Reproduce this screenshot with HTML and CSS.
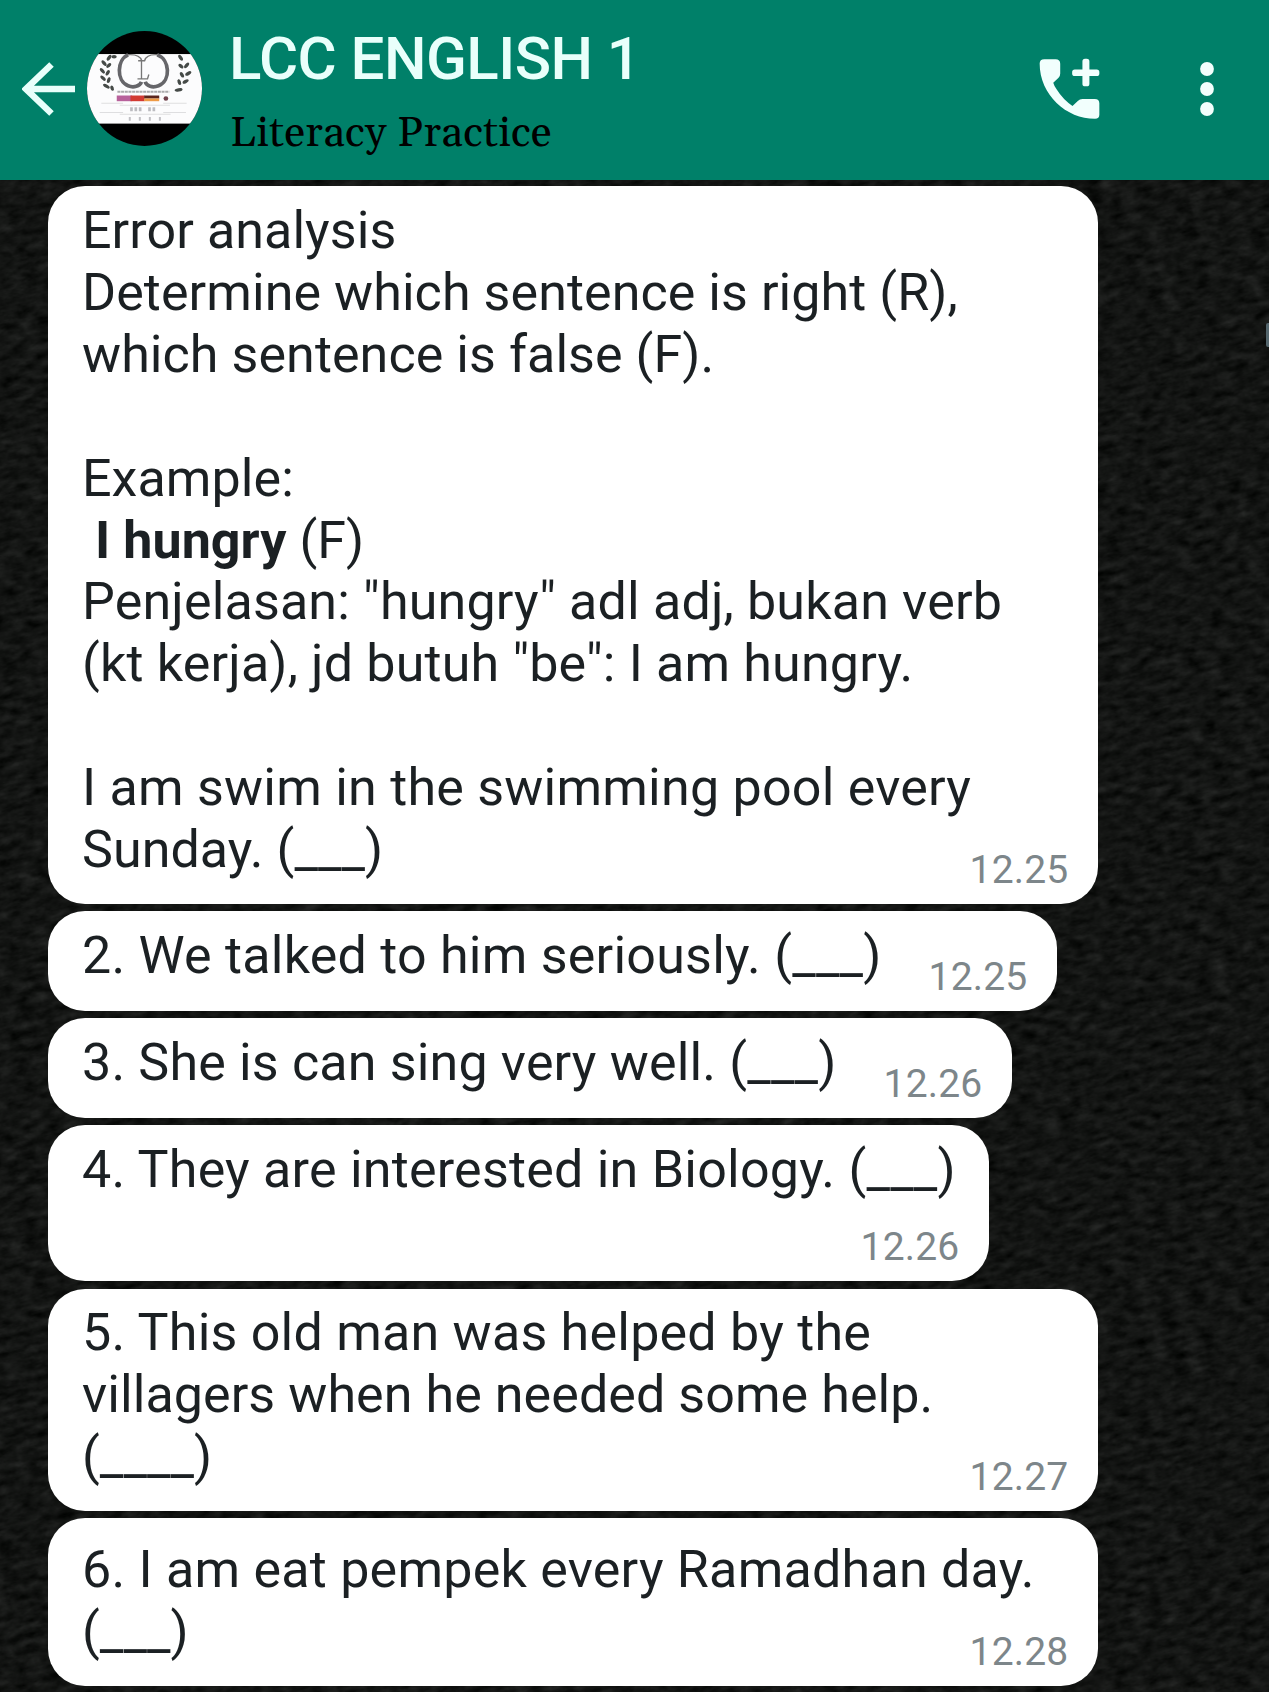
FILE: index.html
```html
<!DOCTYPE html>
<html lang="en">
<head>
<meta charset="utf-8">
<title>LCC ENGLISH 1</title>
<link rel="stylesheet" href="styles.css">
</head>
<body>
<div class="app">
  <header class="topbar">
    <svg class="back" viewBox="0 0 54 54" aria-label="Back"><path d="M53 27H4M29.500 2.500L4 27L29.500 51.500" fill="none" stroke="#e9fffb" stroke-width="6.500"/></svg>
    <svg class="avatar" viewBox="22 19 344 344">
      <defs><clipPath id="round"><circle cx="194" cy="191" r="172"/></clipPath></defs>
      <g clip-path="url(#round)">
        <rect x="22" y="19" width="344" height="344" fill="#000"/>
        <rect x="22" y="88" width="344" height="208" fill="#fcfcfd"/>
        <g fill="none" stroke="#66666a" stroke-width="11">
          <path d="M145 90C112 104 108 168 145 183C162 190 180 184 185 171"/>
          <path d="M232 90C270 104 274 168 236 183C218 190 200 184 196 171"/>
        </g>
        <g fill="none" stroke="#777" stroke-width="4">
          <path d="M145 90Q180 88 186 108M232 90Q200 88 194 108"/>
          <path d="M175 108H196M185 108V161M173 162H203L207 149"/>
        </g>
        <g fill="#454a47">
          <ellipse cx="88" cy="99" rx="10" ry="5" transform="rotate(-55 88 99)"/><ellipse cx="103" cy="96" rx="8" ry="5"/>
          <ellipse cx="73" cy="115" rx="10" ry="5" transform="rotate(50 73 115)"/><ellipse cx="87" cy="122" rx="9" ry="5" transform="rotate(-40 87 122)"/>
          <ellipse cx="68" cy="138" rx="10" ry="5" transform="rotate(50 68 138)"/><ellipse cx="84" cy="144" rx="9" ry="5" transform="rotate(-60 84 144)"/>
          <ellipse cx="70" cy="160" rx="10" ry="5" transform="rotate(45 70 160)"/><ellipse cx="87" cy="166" rx="9" ry="5" transform="rotate(-70 87 166)"/>
          <ellipse cx="80" cy="184" rx="11" ry="5" transform="rotate(30 80 184)"/><ellipse cx="97" cy="190" rx="8" ry="5" transform="rotate(70 97 190)"/>
          <ellipse cx="302" cy="99" rx="10" ry="5" transform="rotate(55 302 99)"/>
          <ellipse cx="320" cy="122" rx="10" ry="5" transform="rotate(-50 320 122)"/><ellipse cx="303" cy="124" rx="9" ry="5" transform="rotate(40 303 124)"/>
          <ellipse cx="325" cy="146" rx="10" ry="5" transform="rotate(-30 325 146)"/><ellipse cx="306" cy="150" rx="9" ry="5" transform="rotate(60 306 150)"/>
          <ellipse cx="317" cy="170" rx="10" ry="5" transform="rotate(-30 317 170)"/><ellipse cx="298" cy="172" rx="9" ry="5" transform="rotate(70 298 172)"/>
          <ellipse cx="296" cy="195" rx="12" ry="5" transform="rotate(-10 296 195)"/>
        </g>
        <path d="M113 201H268" stroke="#aaaaac" stroke-width="6" stroke-dasharray="9 2"/>
        <rect x="111" y="212" width="46" height="17" fill="#b8619b"/>
        <rect x="152" y="212" width="42" height="17" fill="#d23a32"/>
        <rect x="193" y="212" width="45" height="9" fill="#5b251c"/>
        <rect x="193" y="221" width="45" height="8" fill="#ee9a45"/>
        <circle cx="258" cy="221" r="7" fill="#70434d"/>
        <path d="M65 235H130M250 235H320M120 241H270M60 263H130M250 263H318M120 268H272" stroke="#dedee0" stroke-width="3"/>
        <path d="M151 253H189M205 253H229" stroke="#bcbcc0" stroke-width="12" stroke-dasharray="8 5"/>
        <path d="M147 282H245" stroke="#c0c0c4" stroke-width="11" stroke-dasharray="6 24"/>
      </g>
    </svg>
    <div class="heading">
      <h1 class="title">LCC ENGLISH 1</h1>
      <p class="subtitle">Literacy Practice</p>
    </div>
    <svg class="call" viewBox="117 114 184 186" aria-label="Add call"><g fill="#f2fffd"><path d="M133 117H167Q181 117 181 131V160Q181 168 176 173L160 188Q162 196 170 208Q190 240 218 258L234 243Q240 237 248 237H285Q299 237 299 250V285Q299 297 286 297C200 297 119 225 119 130Q119 117 133 117Z"/><rect x="217" y="148" width="82" height="20" rx="8"/><rect x="248" y="116" width="21" height="83" rx="8"/></g></svg>
    <svg class="more" viewBox="0 0 14 54" aria-label="More options"><g fill="#f2fffd"><circle cx="7" cy="7" r="6.900"/><circle cx="7" cy="27" r="6.900"/><circle cx="7" cy="47" r="6.900"/></g></svg>
  </header>
  <main class="chat">
    <svg class="wallpaper" aria-hidden="true">
      <filter id="paper" x="0" y="0" width="100%" height="100%" color-interpolation-filters="sRGB">
        <feTurbulence type="fractalNoise" baseFrequency="0.06 0.13" numOctaves="4" seed="23"/>
        <feColorMatrix type="matrix" values="0.13 0.09 0 0 -0.036  0.13 0.09 0 0 -0.030  0.13 0.09 0 0 -0.036  0 0 0 0 1"/>
      </filter>
      <rect x="-500" y="-500" width="2400" height="2700" transform="rotate(-14)" filter="url(#paper)"/>
    </svg>
    <span class="scroll-mark"></span>
    <article class="bubble bubble-full">
      <div class="text">
        <span class="line">Error analysis</span>
        <span class="line">Determine which sentence is right (R),</span>
        <span class="line">which sentence is false (F).</span>
        <span class="line"></span>
        <span class="line">Example:</span>
        <span class="line"> <b>I hungry</b> (F)</span>
        <span class="line loose">Penjelasan: "hungry" adl adj, bukan verb</span>
        <span class="line loose">(kt kerja), jd butuh "be": I am hungry.</span>
        <span class="line"></span>
        <span class="line looser">I am swim in the swimming pool every</span>
        <span class="line">Sunday. (___)</span>
      </div>
      <time class="time">12.25</time>
    </article>
    <article class="bubble bubble-two">
      <div class="text"><span class="line looser">2. We talked to him seriously. (___)</span></div>
      <time class="time">12.25</time>
    </article>
    <article class="bubble bubble-three">
      <div class="text"><span class="line loose">3. She is can sing very well. (___)</span></div>
      <time class="time">12.26</time>
    </article>
    <article class="bubble bubble-four">
      <div class="text"><span class="line looser">4. They are interested in Biology. (___)</span></div>
      <time class="time">12.26</time>
    </article>
    <article class="bubble bubble-full bubble-five">
      <div class="text">
        <span class="line looser">5. This old man was helped by the</span>
        <span class="line">villagers when he needed some help.</span>
        <span class="line">(____)</span>
      </div>
      <time class="time">12.27</time>
    </article>
    <article class="bubble bubble-full bubble-six">
      <div class="text">
        <span class="line looser">6. I am eat pempek every Ramadhan day.</span>
        <span class="line">(___)</span>
      </div>
      <time class="time">12.28</time>
    </article>
  </main>
</div>
</body>
</html>
```
FILE: styles.css
```css
* { box-sizing: border-box; }
body { margin: 0; background: #111311; font-family: Roboto, "Liberation Sans", sans-serif; }
h1, p { margin: 0; }
svg { display: block; flex: none; }
.app { display: flex; flex-direction: column; width: 1269px; height: 1692px; overflow: hidden; }
.topbar { display: flex; align-items: center; flex: none; height: 180px; padding: 0 55px 3px 22px; background: #008069; }
.back { width: 54px; height: 54px; }
.avatar { width: 115px; height: 115px; margin-left: 11px; }
.heading { flex: 1; margin-left: 27px; align-self: flex-start; padding-top: 24px; white-space: nowrap; }
.title { color: #e9fffb; font-size: 60px; line-height: 70px; font-weight: 500; letter-spacing: -0.540px; }
.subtitle { margin-top: 12px; padding-left: 1px; color: #000; font-family: Georgia, Gelasio, "Liberation Serif", serif; font-size: 43px; line-height: 56px; letter-spacing: 0.270px; }
.call { width: 61px; height: 62px; }
.more { width: 14px; height: 54px; margin-left: 100px; }
.chat { position: relative; flex: 1; display: flex; flex-direction: column; align-items: flex-start; gap: 7.300px; padding: 6px 0 0 48px; }
.wallpaper { position: absolute; inset: 0; width: 100%; height: 100%; overflow: hidden; }
.scroll-mark { position: absolute; right: 0; top: 143px; width: 3px; height: 24px; background: #53656c; border-radius: 2px 0 0 2px; }
.bubble { position: relative; display: flex; flex: none; align-items: flex-end; height: 100px; padding: 14px 29px 0 34px; border-radius: 37px; background: #fff; }
.bubble-full { width: 1049.500px; height: 717.500px; }
.bubble-two { width: 1008.500px; }
.bubble-three { width: 963.500px; }
.bubble-four { width: 940.500px; height: 156px; }
.bubble-five { height: 222.500px; padding-top: 13px; }
.bubble-six { height: 168px; padding-top: 21px; }
.text { display: flex; flex: 1; flex-direction: column; align-items: flex-start; align-self: flex-start; min-width: 0; color: #1b2023; font-size: 52px; line-height: 61.900px; white-space: pre; }
.line { display: block; min-height: 61.900px; letter-spacing: 0.070px; }
.loose { letter-spacing: 0.170px; }
.looser { letter-spacing: 0.230px; }
.time { margin-bottom: 11px; color: #7d868a; font-size: 39px; line-height: 46px; letter-spacing: 0.200px; }
```
